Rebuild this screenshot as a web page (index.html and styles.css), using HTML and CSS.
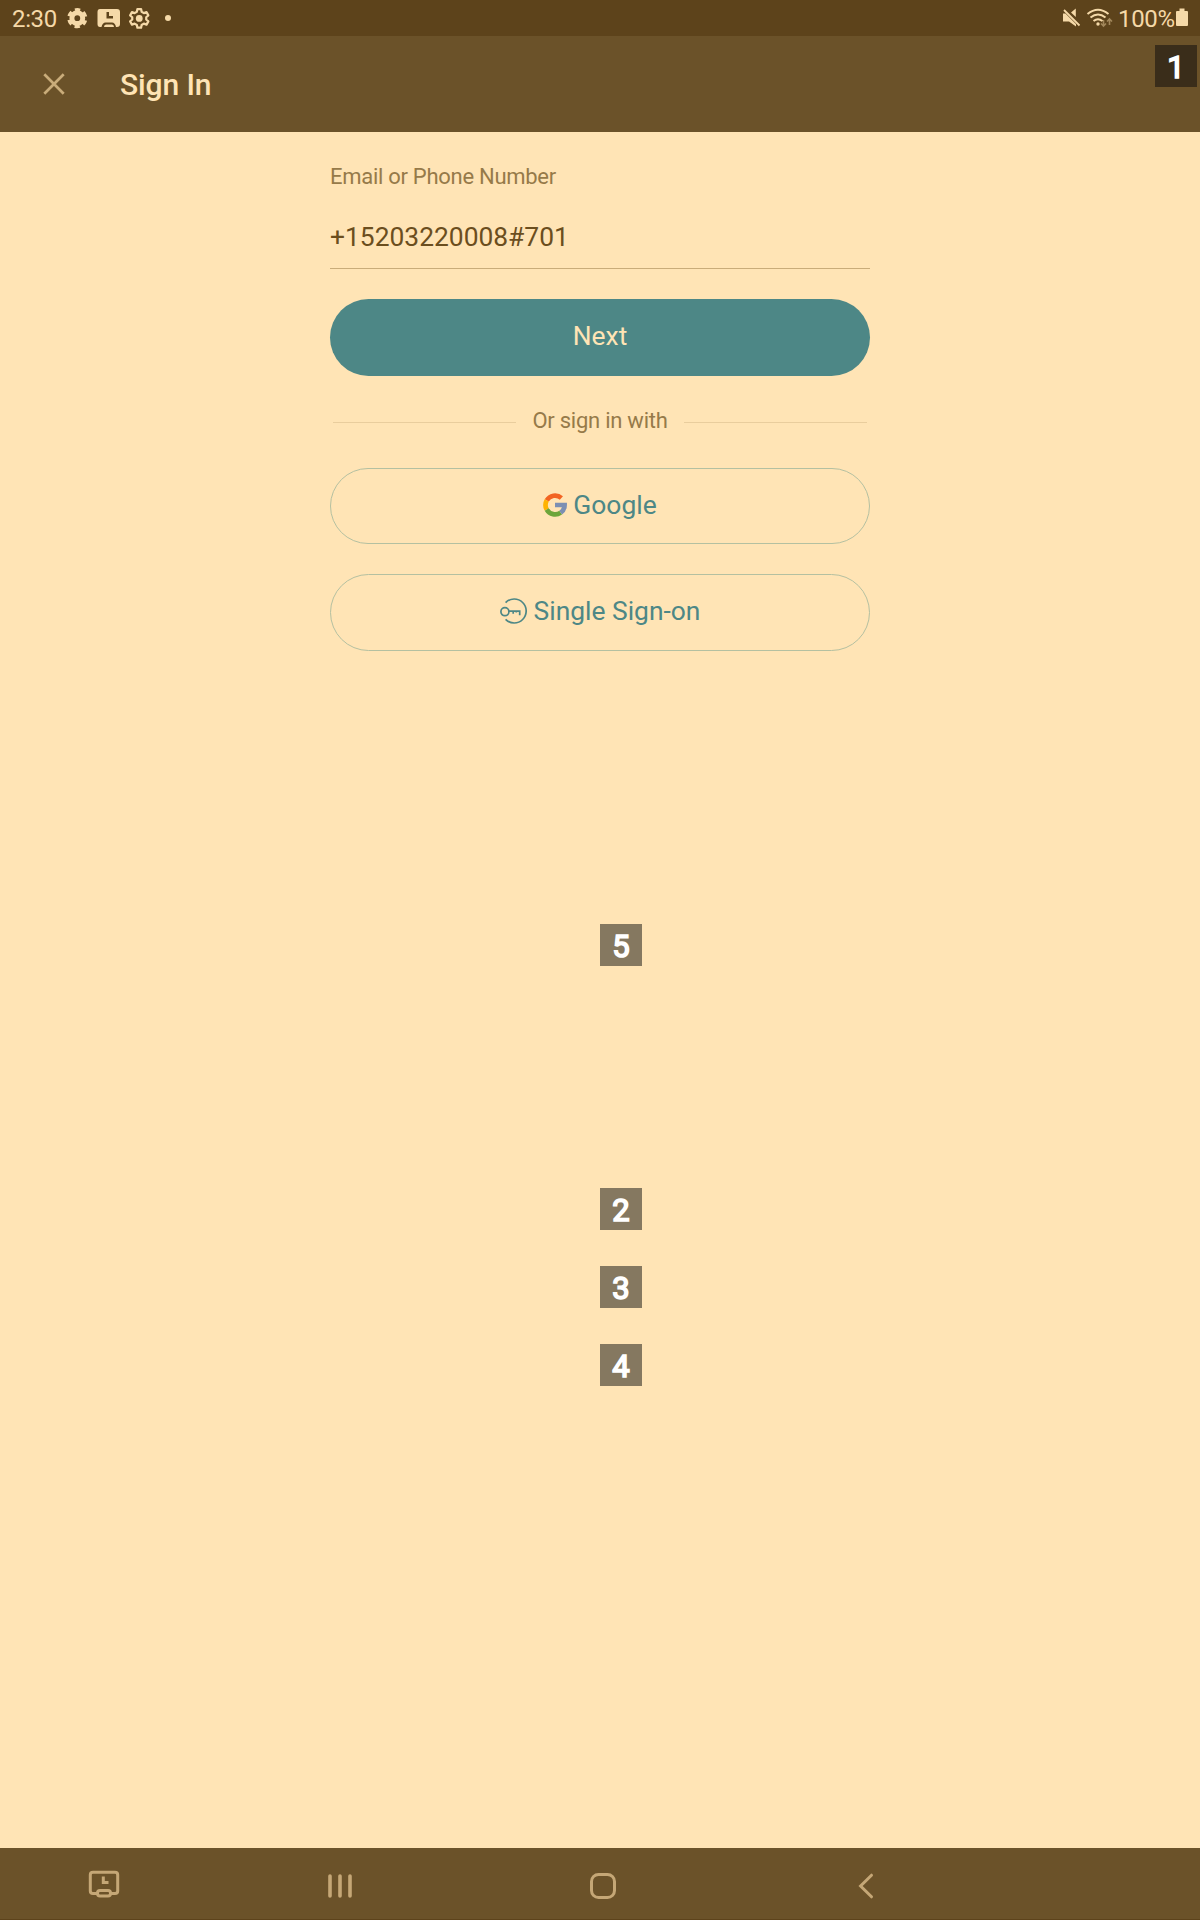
FILE: index.html
```html
<!DOCTYPE html>
<html lang="en">
<head>
<meta charset="utf-8">
<title>Sign In</title>
<link rel="stylesheet" href="styles.css">
</head>
<body>
<div class="screen">
  <div class="status">
    <span class="time">2:30</span>
    <svg class="status-left" width="100" height="24" viewBox="0 0 100 24">
      <g fill="none" stroke="currentColor">
        <circle cx="11.3" cy="12.2" r="5.4" stroke-width="5"/>
        <circle cx="11.3" cy="12.2" r="8.3" stroke-width="3.6" stroke-dasharray="5 3.691" stroke-dashoffset="2.5" transform="rotate(30 11.3 12.2)"/>
      </g>
      <path fill="currentColor" fill-rule="evenodd" d="M34 3H51Q54 3 54 6V18Q54 21 51 21H50Q49 16.500 46 16.500H39.500Q36.500 16.500 35.500 21H34Q31.500 21 31.500 18V6Q31.500 3 34 3ZM40.500 6V12.500H47V10H43V6ZM40 18.500H46Q48 18.500 48 21H38Q38 18.500 40 18.500Z"/>
      <g transform="translate(62.200 1.200) scale(.92)">
        <path fill="none" stroke="currentColor" stroke-width="2.400" stroke-linejoin="round" d="M10 2h4l.6 3 2.400 1.400 2.900-1 2 3.500-2.300 2v2.500l2.300 2-2 3.500-2.900-1-2.400 1.400-.6 3h-4l-.6-3L7 17.900l-2.900 1-2-3.500 2.300-2v-2.500l-2.300-2 2-3.500 2.900 1L9.400 5Z"/>
        <circle cx="12" cy="12.200" r="3.700" fill="currentColor"/>
      </g>
    </svg>
    <span class="dot"></span>
    <svg class="status-right" width="52" height="24" viewBox="0 0 52 24">
      <path fill="currentColor" d="M2 7.500H4.500L15 18V20.500L8 15.500H2ZM10 6.500 14.800 2.500V11Z"/>
      <path stroke="currentColor" stroke-width="1.800" d="M3 4 18.500 19.500"/>
      <g fill="none" stroke="currentColor" stroke-width="2">
        <path d="M26.500 8Q37 -.5 47.500 8"/><path d="M29.500 11.500Q37 5.500 44.500 11.500"/><path d="M32.500 15Q37 11.500 41.500 15"/>
      </g>
      <circle cx="37" cy="18" r="1.700" fill="currentColor"/>
      <path class="dim" fill="none" stroke="currentColor" stroke-width="1.600" d="M42.500 14v6M40 17.500l2.500 2.500 2.500-2.500M48.500 19v-6M46 15.500l2.500-2.500 2.500 2.500"/>
    </svg>
    <span class="percent">100%</span>
    <svg class="battery" width="12" height="20" viewBox="0 0 12 20"><path fill="currentColor" d="M3.500 1.500h5V4H11q1 0 1 1v13q0 1-1 1H1q-1 0-1-1V5q0-1 1-1h2.500Z"/></svg>
  </div>
  <header class="appbar">
    <svg class="close" width="22" height="22" viewBox="0 0 22 22"><path fill="none" stroke="currentColor" stroke-width="2.700" d="M1.300 1.300 20.700 20.700M20.700 1.300 1.300 20.700"/></svg>
    <h1>Sign In</h1>
  </header>
  <main>
    <form class="form">
      <div class="label">Email or Phone Number</div>
      <div class="field">+15203220008#701</div>
      <div class="button primary">Next</div>
      <div class="divider"><span class="text">Or sign in with</span></div>
      <div class="button google">
        <svg width="24" height="24" viewBox="0 0 24 24">
          <g fill="none" stroke-width="4.700">
            <path stroke="#f26322" d="M3.700 7.400A9.600 9.600 0 0 1 18.400 5"/>
            <path stroke="#ffb300" d="M3.700 16.500A9.600 9.600 0 0 1 3.700 7.400"/>
            <path stroke="#6da53a" d="M17.700 19.600A9.700 9.700 0 0 1 3.700 16.500"/>
            <path stroke="#7b8fb3" d="M12 12H21.600Q21.600 16.800 17.700 19.600"/>
          </g>
        </svg>
        <span>Google</span>
      </div>
      <div class="button sso">
        <svg width="27" height="26" viewBox="0 0 27 26">
          <g fill="none" stroke="currentColor" stroke-width="1.700">
            <path d="M5.600 4.600A12 12 0 1 1 5.600 21.400"/>
            <circle cx="4.900" cy="13.700" r="4"/>
            <path d="M8.900 13.100H19.700V17.200M13.200 13.100V15.700M16.300 13.100v1.500"/>
          </g>
        </svg>
        <span>Single Sign-on</span>
      </div>
    </form>
  </main>
  <nav class="navbar">
    <svg width="32" height="28" viewBox="0 0 32 28"><g fill="none" stroke="currentColor" stroke-width="3"><path d="M9 23.500H5Q2.300 23.500 2.300 21V4.800Q2.300 2.300 5 2.300H27Q29.700 2.300 29.700 4.800V21Q29.700 23.500 27 23.500H22"/><rect x="9.500" y="20.500" width="13" height="5.500" rx="2.500"/><path d="M15.300 6.500V12.500H20.500"/></g></svg>
    <svg width="26" height="26" viewBox="0 0 26 26"><path stroke="currentColor" stroke-width="3.600" stroke-linecap="round" d="M3 3V23M13 3V23M23 3V23"/></svg>
    <svg width="26" height="26" viewBox="0 0 26 26"><rect x="1.500" y="1.500" width="23" height="23" rx="7" fill="none" stroke="currentColor" stroke-width="3"/></svg>
    <svg width="16" height="26" viewBox="0 0 16 26"><path fill="none" stroke="currentColor" stroke-width="3" stroke-linecap="round" d="M13.500 2.200 2.600 13 13.500 23.800"/></svg>
  </nav>
  <span class="badge b1">1</span>
  <span class="badge b5">5</span>
  <span class="badge b2">2</span>
  <span class="badge b3">3</span>
  <span class="badge b4">4</span>
</div>
</body>
</html>
```
FILE: styles.css
```css
* { box-sizing: border-box; }
body { margin: 0; font-family: Roboto, "Liberation Sans", sans-serif; }
svg { display: block; flex: none; }
.screen {
  position: relative;
  display: flex;
  flex-direction: column;
  width: 1200px;
  height: 1920px;
  background: #ffe4b5;
}
.status {
  display: flex;
  align-items: center;
  height: 36px;
  padding: 0 12px;
  background: #5d431b;
  color: #f5d9a8;
  font-size: 24px;
  letter-spacing: -0.35px;
  line-height: 36px;
}
.time { width: 54px; padding-top: 2px; }
.status-left { width: 100px; }
.dot { width: 6px; height: 6px; border-radius: 50%; background: currentColor; margin-left: -1px; }
.status-right { margin-left: auto; }
.dim { opacity: .45; }
.percent { padding-top: 2px; width: 57px; margin-left: 5px; white-space: nowrap; }
.battery { margin: -3px 0 0 1px; }
.appbar {
  display: flex;
  align-items: center;
  height: 96px;
  padding: 0 43px;
  gap: 55px;
  background: #6b5229;
  color: #ffe4b5;
}
.close { color: #c9ac7a; }
.appbar h1 { margin: 2px 0 0; font-size: 30px; font-weight: 500; line-height: 34px; letter-spacing: -0.1px; }
main { flex: 1; display: flex; justify-content: center; }
.form { width: 540px; padding-top: 32px; }
.label { font-size: 22px; line-height: 26px; letter-spacing: -0.28px; color: #967a49; }
.field {
  height: 79px;
  padding-top: 31px;
  font-size: 26.4px;
  line-height: 32px;
  color: #6b4e1e;
  border-bottom: 1px solid #c9ac7a;
}
.button {
  display: flex;
  align-items: center;
  justify-content: center;
  border-radius: 39px;
  font-size: 26.4px;
  line-height: 32px;
}
.primary { height: 77px; margin-top: 30px; padding-bottom: 3px; background: #4d8786; color: #ffe4b5; }
.divider {
  display: flex;
  align-items: center;
  gap: 16px;
  height: 26px;
  margin: 32px 3px 34px;
  font-size: 22px;
  line-height: 26px;
  letter-spacing: -0.25px;
  color: #967a49;
}
.divider::before, .divider::after { content: ""; flex: 1; height: 1px; margin-top: 3px; background: #e9cd9d; }
.google, .sso { border: 1px solid #b4c0a1; color: #4d8786; }
.google { height: 76px; gap: 6px; padding-bottom: 2px; }
.sso { height: 77px; margin-top: 30px; gap: 7px; padding-bottom: 3px; }
.navbar {
  display: flex;
  align-items: center;
  height: 72px;
  padding: 5px 0 0 88px;
  background: #6b5229;
  color: #c5a776;
  border-bottom: 1px solid #5d431b;
}
.navbar svg:nth-child(1) { margin-top: -4px; }
.navbar svg:nth-child(2) { margin-left: 207px; }
.navbar svg:nth-child(3) { margin-left: 237px; }
.navbar svg:nth-child(4) { margin-left: 242px; }
.badge {
  position: absolute;
  left: 600px;
  width: 42px;
  height: 42px;
  background: #857860;
  color: #fff;
  font-size: 31px;
  font-weight: 400;
  line-height: 45px;
  text-align: center;
  -webkit-text-stroke: 1.6px #fff;
}
.b1 { left: 1155px; top: 45px; background: #3a2d1a; }
.b5 { top: 924px; }
.b2 { top: 1188px; }
.b3 { top: 1266px; }
.b4 { top: 1344px; }
```
